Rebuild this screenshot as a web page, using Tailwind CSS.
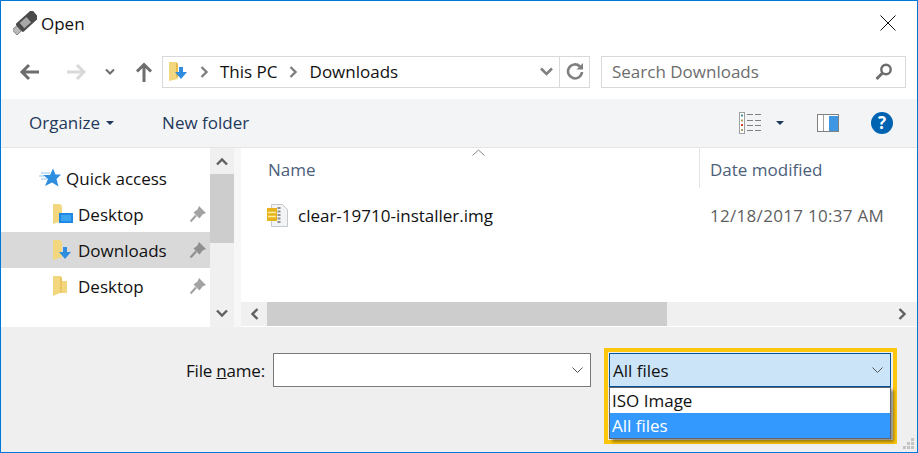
<!DOCTYPE html>
<html lang="en">
<head>
  <meta charset="UTF-8" />
  <title>Open</title>
  <script src="https://cdn.jsdelivr.net/npm/@tailwindcss/browser@4"></script>
</head>
<body class="bg-white">
  <div class="relative w-[918px] h-[453px] overflow-hidden border border-[#0078d7] bg-white flex flex-col font-['Open_Sans',sans-serif] text-[17px] text-[#111]">

    <!-- title bar -->
    <div class="h-[44px] flex items-center pl-[12px] pr-[21px] shrink-0">
      <svg class="w-[24px] h-[24px]" viewBox="0 0 24 24">
        <g transform="rotate(-42 12 12)">
          <rect x="-2" y="8.500" width="6" height="7" fill="#b9b9b9" stroke="#777" stroke-width="0.8"/>
          <rect x="4" y="6.500" width="22" height="11" rx="1.500" fill="#4a4a4a"/>
          <rect x="8" y="8.500" width="9" height="7" fill="#a8a8a8"/>
        </g>
      </svg>
      <span class="ml-[4px] mt-[1px]">Open</span>
      <svg class="ml-auto w-[16px] h-[16px]" viewBox="0 0 16 16"><path d="M0.500 0.500L15.500 15.500M15.500 0.500L0.500 15.500" stroke="#111" stroke-width="1" fill="none"/></svg>
    </div>

    <!-- nav row -->
    <div class="h-[54px] flex items-center shrink-0 pb-[1px]">
      <svg class="ml-[18px] w-[21px] h-[18px]" viewBox="0 0 21 18"><path d="M20 9H3M10 2L3 9l7 7" stroke="#6d6d6d" stroke-width="3" fill="none"/></svg>
      <svg class="ml-[26px] w-[21px] h-[18px]" viewBox="0 0 21 18"><path d="M1 9h17M11 2l7 7-7 7" stroke="#d9d9d9" stroke-width="3" fill="none"/></svg>
      <svg class="ml-[18px] w-[10px] h-[8px]" viewBox="0 0 10 8"><path d="M1 1.500l4 4 4-4" stroke="#6d6d6d" stroke-width="2" fill="none"/></svg>
      <svg class="ml-[20px] w-[18px] h-[20px]" viewBox="0 0 18 20"><path d="M9 20V3M2 9.500L9 2.500l7 7" stroke="#6d6d6d" stroke-width="3" fill="none"/></svg>
      <div class="ml-[9px] w-[428px] h-[32px] border border-[#d9d9d9] flex items-center">
        <svg class="ml-[6px] w-[20px] h-[21px] shrink-0" viewBox="0 0 20 21">
          <path d="M0 1h7l2 2v15l-9 2z" fill="#f3d77e"/><path d="M7 1l2 2v13H7z" fill="#e2b84f"/>
          <path d="M10 6h4v5h4l-6 7-6-7h4z" fill="#2f8de0"/>
        </svg>
        <svg class="ml-[11px] w-[8px] h-[12px] shrink-0" viewBox="0 0 8 12"><path d="M1.500 1l5 5-5 5" stroke="#808080" stroke-width="2.400" fill="none"/></svg>
        <span class="ml-[12px]">This PC</span>
        <svg class="ml-[11px] w-[8px] h-[12px] shrink-0" viewBox="0 0 8 12"><path d="M1.500 1l5 5-5 5" stroke="#808080" stroke-width="2.400" fill="none"/></svg>
        <span class="ml-[13px]">Downloads</span>
        <svg class="ml-auto w-[13px] h-[9px] shrink-0" viewBox="0 0 13 9"><path d="M1 1.500l5.500 5.500L12 1.500" stroke="#808080" stroke-width="2.600" fill="none"/></svg>
        <div class="ml-[6px] h-full w-[30px] border-l border-[#d9d9d9] flex items-center justify-center shrink-0">
          <svg class="w-[18px] h-[18px]" viewBox="0 0 18 18"><path d="M14 3.500A7 7 0 1 0 16 9" stroke="#808080" stroke-width="2.600" fill="none"/><path d="M10.500 6.500h6.500V0z" fill="#808080"/></svg>
        </div>
      </div>
      <div class="ml-[11px] w-[305px] h-[32px] border border-[#d9d9d9] flex items-center pl-[10px] pr-[12px] text-[#6d6d6d]">
        <span>Search Downloads</span>
        <svg class="ml-auto w-[18px] h-[18px]" viewBox="0 0 18 18"><circle cx="11" cy="6.500" r="4.700" stroke="#6d6d6d" stroke-width="2.400" fill="none"/><path d="M7.500 10L1.500 16" stroke="#6d6d6d" stroke-width="3" fill="none"/></svg>
      </div>
    </div>

    <!-- toolbar -->
    <div class="h-[49px] bg-[#f3f4f6] border-b border-[#e5e5e5] flex items-center shrink-0 text-[#1e395b]">
      <span class="ml-[28px]">Organize</span>
      <span class="ml-[6px] w-0 h-0 border-x-[4px] border-x-transparent border-t-[4px] border-t-[#1e395b]"></span>
      <span class="ml-[48px]">New folder</span>
      <svg class="ml-auto w-[22px] h-[22px]" viewBox="0 0 22 22">
        <rect x="0.500" y="0.500" width="5" height="21" fill="#fff" stroke="#a0a0a0"/>
        <rect x="2" y="2.500" width="2" height="2" fill="#3f8f9f"/><rect x="2" y="7.500" width="2" height="2" fill="#a8a050"/><rect x="2" y="12" width="2" height="2" fill="#d04030"/><rect x="2" y="17" width="2" height="2" fill="#a0a060"/>
        <path d="M8 2.500h6M16 2.500h6M8 8.500h6M16 8.500h6M8 13.500h6M16 13.500h6M8 18.500h6M16 18.500h6" stroke="#808080" stroke-width="1"/>
      </svg>
      <span class="ml-[15px] w-0 h-0 border-x-[4px] border-x-transparent border-t-[4px] border-t-[#1e395b]"></span>
      <svg class="ml-[33px] w-[22px] h-[18px]" viewBox="0 0 22 18">
        <rect x="0.500" y="0.500" width="21" height="17" fill="#fff" stroke="#808080"/>
        <rect x="6" y="1" width="1" height="16" fill="#a0a0a0"/>
        <rect x="12" y="2" width="9" height="15" fill="#3f97e3"/>
      </svg>
      <svg class="ml-[32px] mr-[24px] w-[22px] h-[22px]" viewBox="0 0 22 22"><circle cx="11" cy="11" r="11" fill="#0063b1"/><text x="11" y="17" text-anchor="middle" fill="#fff" font-size="17" font-weight="700" font-family="Open Sans">?</text></svg>
    </div>

    <!-- content -->
    <div class="h-[179px] flex shrink-0">
      <!-- sidebar -->
      <div class="w-[209px] pt-[12px] shrink-0">
        <div class="h-[36px] flex items-center pl-[38px]">
          <svg class="w-[22px] h-[20px]" viewBox="0 0 22 20">
            <path d="M14 0.500L16.500 6.500H22L17.500 11L19.500 18.500L13 14.500L6 18L9 11L4 7H11z" fill="#2f8de0"/>
            <path d="M2 5h9M0 8h5M2 11h6" stroke="#8cc4f0" stroke-width="1"/>
          </svg>
          <span class="ml-[5px] mt-[2px]">Quick access</span>
        </div>
        <div class="h-[36px] flex items-center pl-[52px]">
          <svg class="w-[20px] h-[20px] shrink-0" viewBox="0 0 20 20"><path d="M0 0h7l2 2v15l-9 3z" fill="#f3d77e"/><path d="M6 9h14v10H6z" fill="#1e88e5"/><path d="M8 11h10v6H8z" fill="#3da5f0"/></svg>
          <span class="ml-[5px] mt-[2px]">Desktop</span>
          <svg class="ml-auto mr-[4px] w-[16px] h-[16px]" viewBox="0 0 16 16"><path d="M9 0L16 7L12.500 8.500L9.500 12.500L3.500 6.500L7.500 3.500z" fill="#a3a3a3"/><path d="M6 9.500L0.500 15.500" stroke="#a3a3a3" stroke-width="2.200"/></svg>
        </div>
        <div class="h-[36px] flex items-center pl-[52px] bg-[#d9d9d9]">
          <svg class="w-[20px] h-[20px] shrink-0" viewBox="0 0 20 20"><path d="M0 0h7l2 2v15l-9 3z" fill="#f3d77e"/><path d="M10 7h4v5h4l-6 7-6-7h4z" fill="#2f8de0"/></svg>
          <span class="ml-[5px] mt-[2px]">Downloads</span>
          <svg class="ml-auto mr-[4px] w-[16px] h-[16px]" viewBox="0 0 16 16"><path d="M9 0L16 7L12.500 8.500L9.500 12.500L3.500 6.500L7.500 3.500z" fill="#8f8f8f"/><path d="M6 9.500L0.500 15.500" stroke="#8f8f8f" stroke-width="2.200"/></svg>
        </div>
        <div class="h-[36px] flex items-center pl-[52px]">
          <svg class="w-[20px] h-[20px] shrink-0" viewBox="0 0 20 20"><path d="M0 0h7l2 2v3h5v12H7l-7 3z" fill="#f3d77e"/><path d="M7 0l2 2v15H7z" fill="#eac566"/></svg>
          <span class="ml-[5px] mt-[2px]">Desktop</span>
          <svg class="ml-auto mr-[4px] w-[16px] h-[16px]" viewBox="0 0 16 16"><path d="M9 0L16 7L12.500 8.500L9.500 12.500L3.500 6.500L7.500 3.500z" fill="#a3a3a3"/><path d="M6 9.500L0.500 15.500" stroke="#a3a3a3" stroke-width="2.200"/></svg>
        </div>
      </div>
      <!-- sidebar scrollbar -->
      <div class="w-[24px] bg-[#f0f0f0] flex flex-col shrink-0">
        <div class="h-[26px] flex items-center justify-center">
          <svg class="w-[12px] h-[9px]" viewBox="0 0 12 9"><path d="M1 7.500l5-5 5 5" stroke="#606060" stroke-width="2.400" fill="none"/></svg>
        </div>
        <div class="h-[69px] bg-[#cdcdcd]"></div>
        <div class="mt-auto h-[27px] flex items-center justify-center">
          <svg class="w-[12px] h-[9px]" viewBox="0 0 12 9"><path d="M1 1.500l5 5 5-5" stroke="#606060" stroke-width="2.400" fill="none"/></svg>
        </div>
      </div>
      <div class="w-[7px] bg-[#f7f7f7] shrink-0"></div>
      <!-- file pane -->
      <div class="flex-1 flex flex-col min-w-0">
        <div class="relative h-[40px] flex shrink-0 text-[#4c607a]">
          <div class="w-[459px] pl-[27px] pt-[9px] border-r border-[#e5e5e5]">Name</div>
          <div class="pl-[10px] pt-[9px]">Date modified</div>
          <svg class="absolute left-[231px] top-[1px] w-[13px] h-[7px]" viewBox="0 0 13 7"><path d="M0.500 6.500l6-5.500 6 5.500" stroke="#888" stroke-width="1" fill="none"/></svg>
        </div>
        <div class="h-[114px] shrink-0">
          <div class="flex items-center h-[54px]">
            <svg class="ml-[26px] w-[22px] h-[23px] shrink-0" viewBox="0 0 22 23">
              <path d="M4.500 0.500h11l5 5v17h-16z" fill="#f1f3f5" stroke="#c4c9ce"/>
              <path d="M12 3v17" stroke="#8f8f8f" stroke-width="3" stroke-dasharray="2 1.500"/>
              <rect x="0" y="4" width="10" height="13" fill="#e6b31e"/><path d="M1 8.500h8M1 12.500h8" stroke="#fff0a0" stroke-width="1.500"/>
            </svg>
            <span class="ml-[9px] mt-[2px]">clear-19710-installer.img</span>
            <span class="absolute left-[709px] mt-[2px] tracking-[0.3px] text-[#5f5f5f]">12/18/2017 10:37 AM</span>
          </div>
        </div>
        <!-- horizontal scrollbar -->
        <div class="h-[24px] bg-[#f0f0f0] flex items-center shrink-0">
          <div class="w-[26px] flex justify-center">
            <svg class="w-[9px] h-[12px]" viewBox="0 0 9 12"><path d="M7.500 1l-5 5 5 5" stroke="#606060" stroke-width="2.400" fill="none"/></svg>
          </div>
          <div class="w-[400px] h-full bg-[#cdcdcd]"></div>
          <svg class="ml-auto mr-[10px] w-[9px] h-[12px]" viewBox="0 0 9 12"><path d="M1.500 1l5 5-5 5" stroke="#606060" stroke-width="2.400" fill="none"/></svg>
        </div>
      </div>
    </div>

    <!-- bottom -->
    <div class="flex-1 bg-[#efefef] flex items-start pt-[27px] pl-[185px]">
      <span class="h-[34px] leading-[34px] tracking-[-0.2px]">File <span class="underline">n</span>ame:</span>
      <div class="absolute left-[272px] top-[352px] w-[318px] h-[34px] bg-white border border-[#7a7a7a] flex items-center justify-end pr-[7px]">
        <svg class="w-[11px] h-[6px]" viewBox="0 0 11 6"><path d="M0.500 0.500l5 5 5-5" stroke="#555" stroke-width="1" fill="none"/></svg>
      </div>
    </div>

    <!-- file type combo with highlight -->
    <div class="absolute left-[603px] top-[347px] w-[293px] h-[96px] border-[4px] border-[#fcc60e]">
      <div class="absolute left-[1px] top-[1px] w-[282px] h-[34px] bg-[#cce4f7] border border-[#005499] flex items-center pl-[3px] pr-[7px]">
        <span class="mt-[1px]">All files</span>
        <svg class="ml-auto w-[11px] h-[6px]" viewBox="0 0 11 6"><path d="M0.500 0.500l5 5 5-5" stroke="#555" stroke-width="1" fill="none"/></svg>
      </div>
      <div class="absolute left-[1px] top-[35px] w-[282px] h-[52px] bg-white border border-[#646464] shadow-[3px_3px_3px_rgba(0,0,0,0.4)]">
        <div class="h-[25px] leading-[25px] pl-[2px]">ISO Image</div>
        <div class="h-[25px] leading-[25px] pl-[2px] bg-[#3399ff] text-white">All files</div>
      </div>
    </div>

    <!-- resize grip -->
    <svg class="absolute right-[2px] bottom-[2px] w-[12px] h-[12px]" viewBox="0 0 12 12">
      <path d="M8 0h3v3H8zM4 4h3v3H4zM8 4h3v3H8zM0 8h3v3H0zM4 8h3v3H4zM8 8h3v3H8z" fill="#c4c4c4"/>
    </svg>
  </div>
</body>
</html>
